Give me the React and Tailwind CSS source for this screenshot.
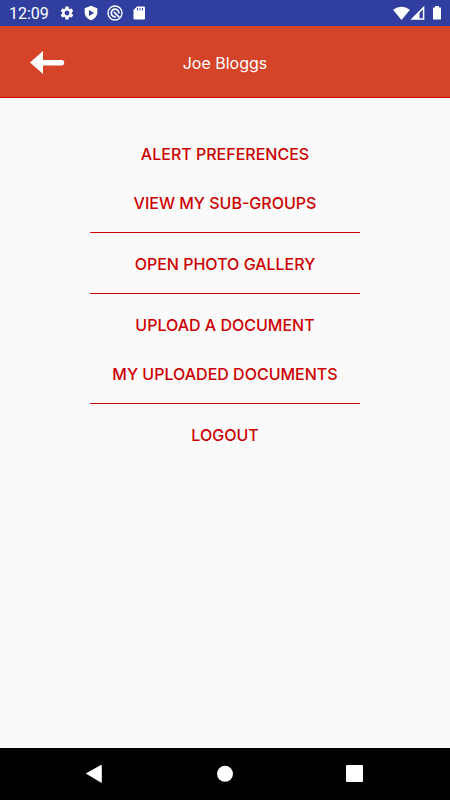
import { MdSettings } from "react-icons/md";

const groups = [
  ["Alert preferences", "View my sub-groups"],
  ["Open photo gallery"],
  ["Upload a document", "My uploaded documents"],
  ["Logout"],
];

function ShieldIcon() {
  return (
    <svg className="h-4 w-4" viewBox="0 0 16 16" aria-hidden="true">
      <path d="M8 .8 14.300 3.200V7.500C14.300 11 11.500 14.200 8 15.300 4.500 14.200 1.700 11 1.700 7.500V3.200Z" fill="white" />
      <path d="M6 5 11 8 6 11Z" fill="#303f9f" />
    </svg>
  );
}

function SyncIcon() {
  return (
    <svg className="h-4 w-4" viewBox="0 0 16 16" fill="none" stroke="white" aria-hidden="true">
      <circle cx="8" cy="8" r="7" strokeWidth="1.400" />
      <path d="M8.800 11.700A3.800 3.800 0 1 1 11.800 8.500M6.800 6.800 12.300 12.300" strokeWidth="1.700" />
    </svg>
  );
}

function CardIcon() {
  return (
    <svg className="h-4 w-4" viewBox="0 0 16 16" aria-hidden="true">
      <path d="M6 1.500H13Q14 1.500 14 2.500V13.500Q14 14.500 13 14.500H3.500Q2.500 14.500 2.500 13.500V5Z" fill="white" />
      <path d="M6.500 3V5.500M9 3V5.500M11.500 3V5.500" stroke="#303f9f" strokeWidth="1" />
    </svg>
  );
}

function StatusBar() {
  return (
    <div className="flex h-[26px] items-center bg-[#303f9f] pr-2 pl-[9px] text-white">
      <span className="w-[50px] pt-0.5 font-['Roboto',sans-serif] text-base leading-5">12:09</span>
      <div className="flex items-center gap-2">
        <MdSettings className="h-4 w-4" aria-hidden="true" />
        <ShieldIcon />
        <SyncIcon />
        <CardIcon />
      </div>
      <div className="ml-auto flex items-center">
        <svg className="h-4 w-[17px]" viewBox="0 0 17 16" aria-hidden="true">
          <path d="M0 4.800Q8.500-1.500 17 4.800L8.500 15Z" fill="white" />
        </svg>
        <svg className="h-4 w-4" viewBox="0 0 16 16" aria-hidden="true">
          <path d="M2.300 13.900 13.600 2.600V13.900Z" fill="none" stroke="white" strokeWidth="1.500" />
          <path d="M9.500 6.700V13.900H2.300Z" fill="white" />
        </svg>
        <svg className="ml-1.5 h-4 w-[10px]" viewBox="0 0 10 16" aria-hidden="true">
          <path d="M3 1H7V2.500H8.500Q9 2.500 9 3V14Q9 14.500 8.500 14.500H1.500Q1 14.500 1 14V3Q1 2.500 1.500 2.500H3Z" fill="white" />
        </svg>
      </div>
    </div>
  );
}

function Header() {
  return (
    <header className="grid h-[72px] grid-cols-[1fr_auto_1fr] items-center border-b border-b-[#cc0000] bg-[#d54429] text-white">
      <button type="button" aria-label="Back" className="ml-[30px] justify-self-start">
        <svg className="h-6 w-[35px]" viewBox="0 0 35 24" fill="white" aria-hidden="true">
          <path d="M0 12.500 13 1V10H31.500A2.700 2.700 0 0 1 31.500 15.400H13V24Z" />
        </svg>
      </button>
      <h1 className="pt-0.5 text-base leading-6">Joe Bloggs</h1>
    </header>
  );
}

function NavigationBar() {
  return (
    <nav aria-label="System" className="flex h-[52px] items-center justify-center gap-[106px] bg-black text-white">
      <button type="button" aria-label="Back">
        <svg className="h-6 w-6" viewBox="0 0 24 24" fill="currentColor" aria-hidden="true">
          <path d="M2.800 11.500 17.800 3Q18.800 2.600 18.800 4V20Q18.800 21.200 17.800 20.600Z" />
        </svg>
      </button>
      <button type="button" aria-label="Home">
        <svg className="h-6 w-6" viewBox="0 0 24 24" fill="currentColor" aria-hidden="true">
          <circle cx="12" cy="11.800" r="8" />
        </svg>
      </button>
      <button type="button" aria-label="Recent apps">
        <svg className="h-6 w-6" viewBox="0 0 24 24" fill="currentColor" aria-hidden="true">
          <rect x="3" y="3" width="17" height="17" rx="1" />
        </svg>
      </button>
    </nav>
  );
}

export default function App() {
  return (
    <div className="flex min-h-screen flex-col bg-[#fafafa] font-['Inter',sans-serif]">
      <StatusBar />
      <Header />
      <main className="mx-auto w-3/5 flex-1 pt-[31px]">
        {groups.map((items, index) => (
          <section key={items[0]}>
            {index > 0 && <hr className="mt-[5px] mb-1.5 h-px border-0 bg-[#cc0000]" />}
            {items.map((label) => (
              <button
                key={label}
                type="button"
                className="block h-[49px] w-full text-base font-medium whitespace-nowrap text-[#cc0000] uppercase"
              >
                {label}
              </button>
            ))}
          </section>
        ))}
      </main>
      <NavigationBar />
    </div>
  );
}
